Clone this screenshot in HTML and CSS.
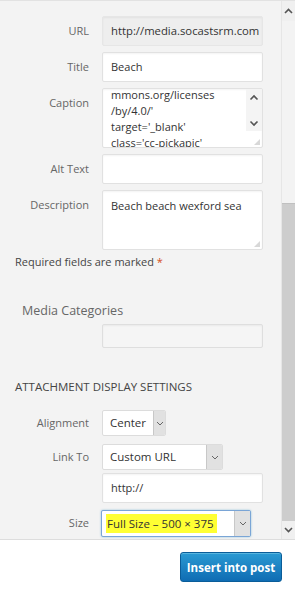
FILE: index.html
```html
<!DOCTYPE html>
<html lang="en">
<head>
  <meta charset="UTF-8" />
  <meta name="viewport" content="width=device-width, initial-scale=1.0" />
  <title>Attachment Details</title>
  <link rel="stylesheet" href="styles.css">
</head>
<body>
  <div class="marco">
    <div class="panel">
      <div class="campos">
        <label class="fila">
          <span class="etiqueta">URL</span>
          <span class="caja solo-lectura">http://media.socastsrm.com</span>
        </label>
        <label class="fila">
          <span class="etiqueta">Title</span>
          <span class="caja">Beach</span>
        </label>
        <label class="fila fila-alta">
          <span class="etiqueta">Caption</span>
          <span class="caja area">
            <span class="area-texto leyenda">mmons.org/licenses<br>/by/4.0/'<br>target='_blank'<br>class='cc-pickapic'</span>
            <span class="area-barra">
              <svg width="10" height="7" viewBox="0 0 10 7"><path d="M1.5 5.5 5 2l3.5 3.5" fill="none" stroke="#555" stroke-width="1.6"/></svg>
              <svg width="10" height="7" viewBox="0 0 10 7"><path d="M1.5 1.5 5 5l3.5-3.5" fill="none" stroke="#555" stroke-width="1.6"/></svg>
            </span>
            <span class="agarre"></span>
          </span>
        </label>
        <label class="fila">
          <span class="etiqueta">Alt Text</span>
          <span class="caja"></span>
        </label>
        <label class="fila fila-alta">
          <span class="etiqueta">Description</span>
          <span class="caja area">
            <span class="area-texto">Beach beach wexford sea</span>
            <span class="agarre"></span>
          </span>
        </label>
      </div>

      <p class="requeridos">Required fields are marked <span class="asterisco">*</span></p>

      <h3 class="categorias">Media Categories</h3>
      <div class="fila">
        <span class="etiqueta"></span>
        <span class="caja vacia"></span>
      </div>

      <h2 class="ajustes">ATTACHMENT DISPLAY SETTINGS</h2>
      <div class="ajustes-campos">
        <div class="fila fila-sel alineacion">
          <span class="etiqueta">Alignment</span>
          <span class="selector ancho-alineacion"><span class="sel-texto">Center</span><span class="sel-flecha"><svg width="8" height="5" viewBox="0 0 8 5"><path d="M1 1l3 3 3-3" fill="none" stroke="#666" stroke-width="1"/></svg></span></span>
        </div>
        <div class="fila fila-sel enlace">
          <span class="etiqueta">Link To</span>
          <span class="selector ancho-enlace"><span class="sel-texto">Custom URL</span><span class="sel-flecha"><svg width="8" height="5" viewBox="0 0 8 5"><path d="M1 1l3 3 3-3" fill="none" stroke="#666" stroke-width="1"/></svg></span></span>
        </div>
        <div class="fila url-propia">
          <span class="etiqueta"></span>
          <span class="caja">http://</span>
        </div>
        <div class="fila fila-sel">
          <span class="etiqueta">Size</span>
          <span class="selector ancho-tamano enfocado"><span class="sel-texto"><mark>Full Size – 500 × 375&nbsp;</mark></span><span class="sel-flecha"><svg width="8" height="5" viewBox="0 0 8 5"><path d="M1 1l3 3 3-3" fill="none" stroke="#666" stroke-width="1"/></svg></span></span>
        </div>
      </div>
    </div>

    <div class="barra">
      <span class="barra-flecha">
        <svg width="9" height="6" viewBox="0 0 9 6"><path d="M1 5 4.5 1.5 8 5" fill="none" stroke="#555" stroke-width="1.6"/></svg>
      </span>
      <span class="barra-pista"></span>
      <span class="barra-pulgar"></span>
      <span class="barra-flecha">
        <svg width="9" height="6" viewBox="0 0 9 6"><path d="M1 1 4.5 4.5 8 1" fill="none" stroke="#555" stroke-width="1.6"/></svg>
      </span>
    </div>
  </div>

  <div class="herramientas">
    <button class="insertar">Insert into post</button>
  </div>
</body>
</html>
```

FILE: styles.css
```css
body {
  margin: 0;
  font-family: "Open Sans", Arial, sans-serif;
  background-color: #f3f3f3;
  color: #444;
  width: 295px;
  height: 590px;
  overflow: hidden;
}
.marco {
  display: flex;
  height: 539px;
  border-top: 1px solid #e2e2e2;
  box-sizing: border-box;
}
.panel {
  width: 282px;
  overflow: hidden;
  padding-top: 15px;
  box-sizing: border-box;
}
.campos {
  display: flex;
  flex-direction: column;
  gap: 6px;
}
.fila {
  display: grid;
  grid-template-columns: 89px 161px;
  column-gap: 13px;
}
.etiqueta {
  text-align: right;
  font-size: 11px;
  color: #666;
  line-height: 30px;
}
.caja {
  display: block;
  height: 30px;
  box-sizing: border-box;
  background: #fff;
  border: 1px solid #e1e1e1;
  border-radius: 2px;
  box-shadow: inset 0 1px 2px rgba(0, 0, 0, 0.05);
  padding: 0 8px;
  font-size: 11px;
  line-height: 28px;
  color: #333;
  white-space: nowrap;
  overflow: hidden;
}
.solo-lectura {
  background: #eeeeee;
  border-color: #e6e6e6;
  padding-right: 0;
  font-size: 11.3px;
}
.fila-alta .caja {
  height: 60px;
}
.area {
  position: relative;
  white-space: normal;
  line-height: 16px;
}
.area-texto {
  display: block;
  padding-top: 7px;
}
.leyenda {
  margin-top: -9px;
}
.area-barra {
  position: absolute;
  right: 0;
  top: 0;
  width: 16px;
  height: 42px;
  display: flex;
  flex-direction: column;
  align-items: center;
  justify-content: space-between;
  padding: 5px 0 4px;
  box-sizing: border-box;
  background: #f4f4f4;
}
.agarre {
  position: absolute;
  right: 2px;
  bottom: 2px;
  width: 6px;
  height: 6px;
  background-image: radial-gradient(circle, #aaa 0.6px, transparent 0.8px);
  background-size: 2px 2px;
  clip-path: polygon(100% 0, 100% 100%, 0 100%);
}
.requeridos {
  margin: 4px 0 0 15px;
  font-size: 11px;
  line-height: 16px;
  color: #444;
}
.asterisco {
  color: #d54e21;
}
.categorias {
  margin: 32px 0 4px 22px;
  font-size: 12.5px;
  font-weight: normal;
  color: #666;
  line-height: 18px;
}
.vacia {
  height: 24px;
  background: #f5f5f5;
  border-color: #dedede;
}
.ajustes {
  margin: 31px 0 15px 15px;
  font-size: 11.5px;
  font-weight: normal;
  color: #444;
  line-height: 16px;
}
.alineacion {
  margin-bottom: 8px;
}
.enlace {
  margin-bottom: 3px;
}
.url-propia {
  margin-bottom: 7px;
}
.fila-sel .etiqueta {
  line-height: 26px;
}
.selector {
  display: flex;
  height: 26px;
  box-sizing: border-box;
  background: #fff;
  border: 1px solid #dcdcdc;
  border-radius: 2px;
  font-size: 11.5px;
  color: #333;
  overflow: hidden;
}
.sel-texto {
  flex: 1;
  padding: 0 7px;
  line-height: 24px;
  white-space: nowrap;
}
.sel-flecha {
  width: 15px;
  background: #e1e1e1;
  border-left: 1px solid #c8c8c8;
  display: flex;
  align-items: center;
  justify-content: center;
}
.ancho-alineacion {
  width: 64px;
}
.ancho-enlace {
  width: 121px;
}
.ancho-tamano {
  width: 150px;
  margin-left: -1px;
  height: 27px;
}
.enfocado {
  border-color: #7aa5d6;
  box-shadow: 0 0 2px rgba(30, 140, 190, 0.5);
}
.enfocado .sel-texto {
  padding: 0 4px;
  line-height: 25px;
}
mark {
  background: #ffff33;
  color: #333;
  padding: 2px 0 2px 1px;
}
.barra {
  width: 13px;
  border-left: 1px solid #e6e6e6;
  display: flex;
  flex-direction: column;
  background: #f0f0f0;
}
.barra-flecha {
  height: 20px;
  display: flex;
  align-items: center;
  justify-content: center;
}
.barra-flecha:last-child {
  height: 18px;
}
.barra-pista {
  height: 182px;
  background: #f3f3f3;
}
.barra-pulgar {
  flex: 1;
  background: #cdcdcd;
  border-top: 1px solid #c0c0c0;
}
.herramientas {
  height: 51px;
  background: #fff;
  border-top: 1px solid #dddddd;
  display: flex;
  justify-content: flex-end;
  align-items: flex-start;
  padding: 12px 13px 0 0;
  box-sizing: border-box;
}
.insertar {
  height: 30px;
  width: 102px;
  padding: 0;
  font-family: "Open Sans", Arial, sans-serif;
  font-size: 11.5px;
  font-weight: bold;
  color: #fff;
  background: linear-gradient(#2a9ad3, #0f6cb3);
  border: 1px solid #0a5d99;
  border-radius: 3px;
  box-shadow: inset 0 1px 0 rgba(120, 200, 230, 0.6);
  cursor: pointer;
}
```
